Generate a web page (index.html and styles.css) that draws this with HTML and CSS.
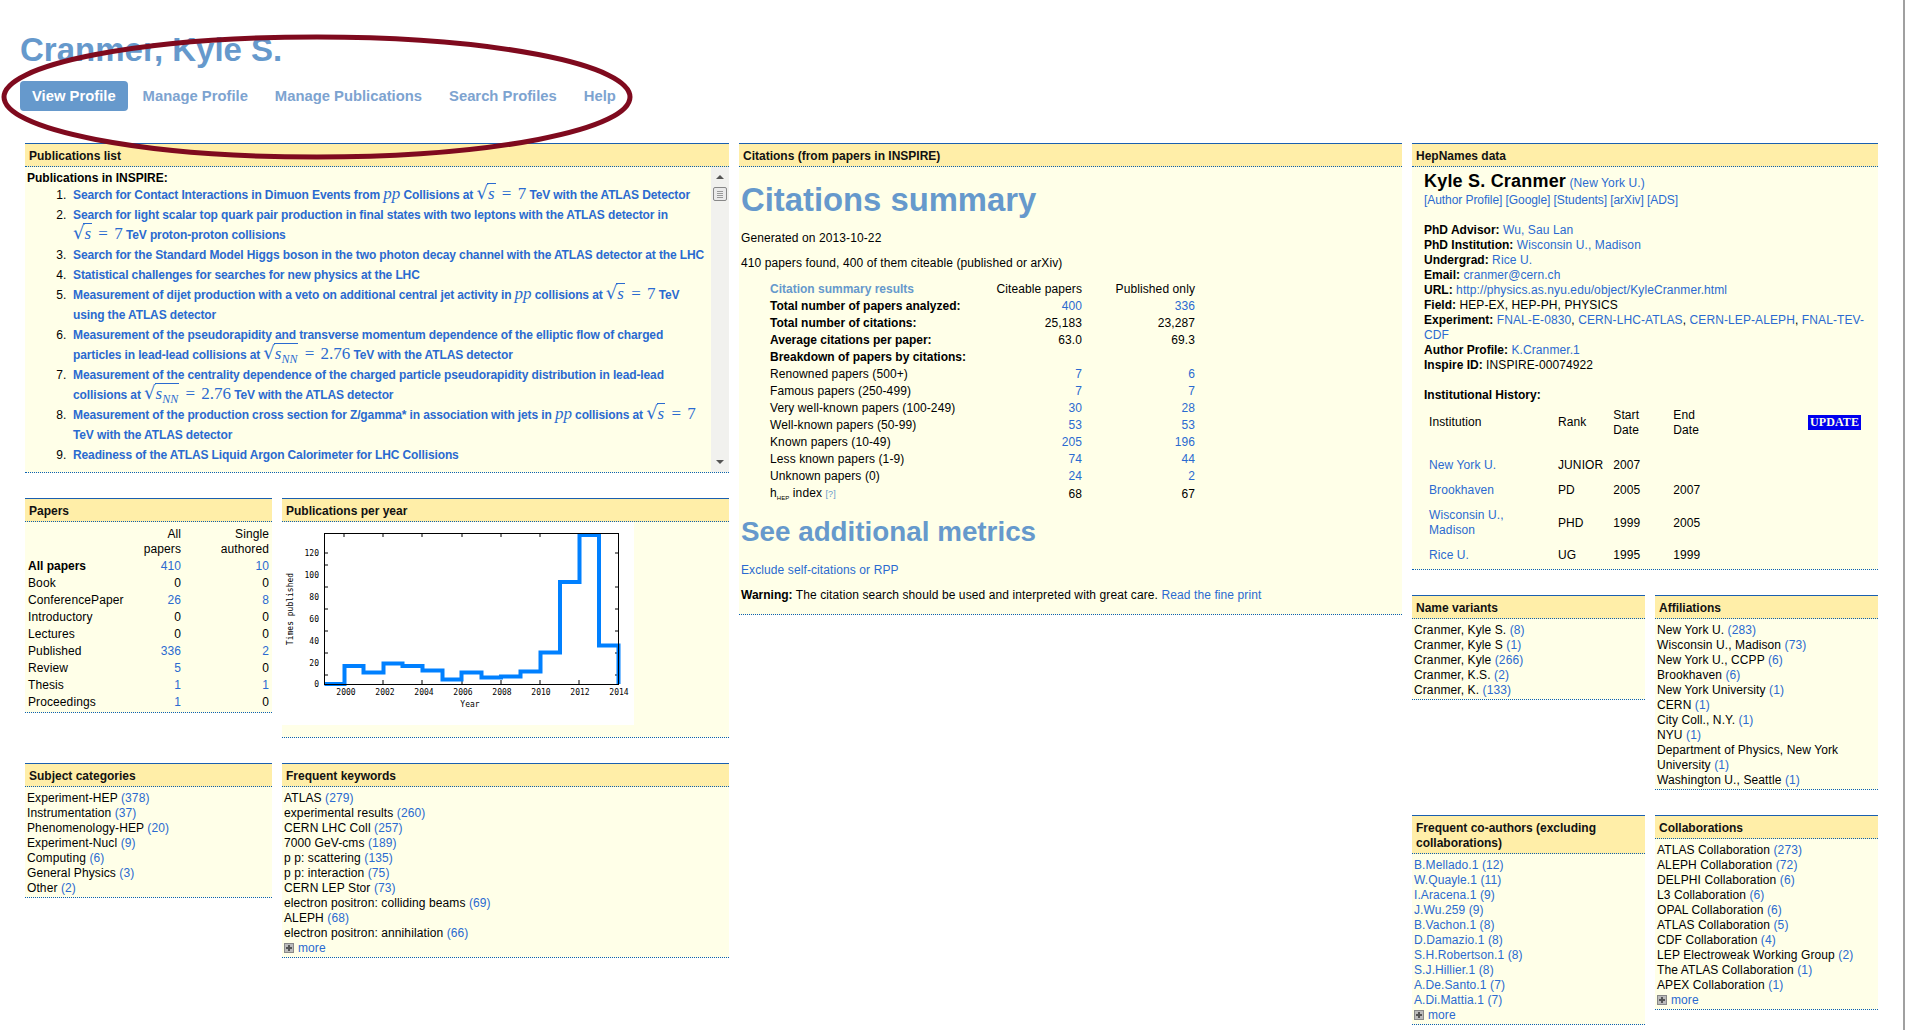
FILE: index.html
```html
<!DOCTYPE html>
<html lang="en">
<head>
  <meta charset="UTF-8" />
  <title>Cranmer, Kyle S. - Author profile</title>
  <link rel="stylesheet" href="styles.css">
</head>
<body>

  <!-- Highlight drawn over the page header -->
  <svg class="highlight" width="640" height="170" viewBox="0 0 640 170">
    <ellipse cx="317" cy="97" rx="313" ry="60" fill="none" stroke="#7f0a1e" stroke-width="5"/>
  </svg>

  <header class="page-header">
    <h1>Cranmer, Kyle S.</h1>
    <nav class="tabs">
      <a class="tab active" href="#">View Profile</a>
      <a class="tab" href="#">Manage Profile</a>
      <a class="tab" href="#">Manage Publications</a>
      <a class="tab" href="#">Search Profiles</a>
      <a class="tab" href="#">Help</a>
    </nav>
  </header>

  <main class="columns">

    <!-- Left column -->
    <div class="col col-left">
      <section class="box box-pubs">
        <h4>Publications list</h4>
        <div class="pubs-body">
          <div class="pubs-text">
            <strong class="pubs-title">Publications in INSPIRE:</strong>
            <ol class="pubs">
              <li><a href="#">Search for Contact Interactions in Dimuon Events from <i class="m">pp</i> Collisions at <span class="m"><span class="rad">√</span><i class="vinc">s</i> = 7</span> TeV with the ATLAS Detector</a></li>
              <li><a href="#">Search for light scalar top quark pair production in final states with two leptons with the ATLAS detector in <span class="m"><span class="rad">√</span><i class="vinc">s</i> = 7</span> TeV proton-proton collisions</a></li>
              <li><a href="#">Search for the Standard Model Higgs boson in the two photon decay channel with the ATLAS detector at the LHC</a></li>
              <li><a href="#">Statistical challenges for searches for new physics at the LHC</a></li>
              <li><a href="#">Measurement of dijet production with a veto on additional central jet activity in <i class="m">pp</i> collisions at <span class="m"><span class="rad">√</span><i class="vinc">s</i> = 7</span> TeV using the ATLAS detector</a></li>
              <li><a href="#">Measurement of the pseudorapidity and transverse momentum dependence of the elliptic flow of charged particles in lead-lead collisions at <span class="m"><span class="rad">√</span><i class="vinc">s<sub>NN</sub></i> = 2.76</span> TeV with the ATLAS detector</a></li>
              <li><a href="#">Measurement of the centrality dependence of the charged particle pseudorapidity distribution in lead-lead collisions at <span class="m"><span class="rad">√</span><i class="vinc">s<sub>NN</sub></i> = 2.76</span> TeV with the ATLAS detector</a></li>
              <li><a href="#">Measurement of the production cross section for Z/gamma* in association with jets in <i class="m">pp</i> collisions at <span class="m"><span class="rad">√</span><i class="vinc">s</i> = 7</span> TeV with the ATLAS detector</a></li>
              <li><a href="#">Readiness of the ATLAS Liquid Argon Calorimeter for LHC Collisions</a></li>
            </ol>
          </div>
          <div class="scrollbar">
            <span class="arrow-up"></span>
            <span class="thumb"></span>
            <span class="arrow-down"></span>
          </div>
        </div>
      </section>

      <div class="row row-papers">
        <section class="box box-narrow box-papers">
          <h4>Papers</h4>
          <table class="papers">
            <tr><th></th><td>All<br>papers</td><td>Single<br>authored</td></tr>
            <tr><th><b>All papers</b></th><td><a href="#">410</a></td><td><a href="#">10</a></td></tr>
            <tr><th>Book</th><td>0</td><td>0</td></tr>
            <tr><th>ConferencePaper</th><td><a href="#">26</a></td><td><a href="#">8</a></td></tr>
            <tr><th>Introductory</th><td>0</td><td>0</td></tr>
            <tr><th>Lectures</th><td>0</td><td>0</td></tr>
            <tr><th>Published</th><td><a href="#">336</a></td><td><a href="#">2</a></td></tr>
            <tr><th>Review</th><td><a href="#">5</a></td><td>0</td></tr>
            <tr><th>Thesis</th><td><a href="#">1</a></td><td><a href="#">1</a></td></tr>
            <tr><th>Proceedings</th><td><a href="#">1</a></td><td>0</td></tr>
          </table>
        </section>

        <section class="box box-wide box-chart">
          <h4>Publications per year</h4>
          <div class="chart-wrap">
            <svg class="chart" width="352" height="203" viewBox="0 0 352 203">
              <rect width="352" height="203" fill="#fff"/>
              <g class="ticks" stroke="#000" stroke-width="1">
                <path d="M42 153h4M42 131h4M42 109h4M42 87h4M42 65h4M42 43h4M42 31h4M337 153h-4M337 131h-4M337 109h-4M337 87h-4M337 65h-4M337 31h-4"/>
                <path d="M62 162v-4M101 162v-4M140 162v-4M180 162v-4M219 162v-4M258 162v-4M297 162v-4M62 11v4M101 11v4M140 11v4M180 11v4M219 11v4M258 11v4M297 11v4"/>
              </g>
              <polyline fill="none" stroke="#0080ff" stroke-width="4"
                points="42.5,162 62.5,162 62.5,144 81.5,144 81.5,150.5 101.5,150.5 101.5,141.5 120.5,141.5 120.5,144 140.5,144 140.5,148.5 160.5,148.5 160.5,157.5 179.5,157.5 179.5,150.5 199.5,150.5 199.5,155.5 219,155.5 219,154.5 238.5,154.5 238.5,149.5 258.5,149.5 258.5,130.5 278,130.5 278,60 297.5,60 297.5,13 317,13 317,123.5 336.5,123.5 336.5,162"/>
              <rect x="42.5" y="11.5" width="294" height="151" fill="none" stroke="#000" stroke-width="1"/>
              <g class="chart-text" text-anchor="end">
                <text x="37" y="165">0</text>
                <text x="37" y="144">20</text>
                <text x="37" y="122">40</text>
                <text x="37" y="100">60</text>
                <text x="37" y="78">80</text>
                <text x="37" y="56">100</text>
                <text x="37" y="34">120</text>
              </g>
              <g class="chart-text" text-anchor="middle">
                <text x="64" y="173">2000</text>
                <text x="103" y="173">2002</text>
                <text x="142" y="173">2004</text>
                <text x="181" y="173">2006</text>
                <text x="220" y="173">2008</text>
                <text x="259" y="173">2010</text>
                <text x="298" y="173">2012</text>
                <text x="337" y="173">2014</text>
                <text x="188" y="185">Year</text>
                <text transform="translate(11 87) rotate(-90)">Times published</text>
              </g>
            </svg>
          </div>
        </section>
      </div>

      <div class="row">
        <section class="box box-narrow box-list">
          <h4>Subject categories</h4>
          <ul class="counts">
            <li>Experiment-HEP <a href="#">(378)</a></li>
            <li>Instrumentation <a href="#">(37)</a></li>
            <li>Phenomenology-HEP <a href="#">(20)</a></li>
            <li>Experiment-Nucl <a href="#">(9)</a></li>
            <li>Computing <a href="#">(6)</a></li>
            <li>General Physics <a href="#">(3)</a></li>
            <li>Other <a href="#">(2)</a></li>
          </ul>
        </section>

        <section class="box box-wide box-list">
          <h4>Frequent keywords</h4>
          <ul class="counts">
            <li>ATLAS <a href="#">(279)</a></li>
            <li>experimental results <a href="#">(260)</a></li>
            <li>CERN LHC Coll <a href="#">(257)</a></li>
            <li>7000 GeV-cms <a href="#">(189)</a></li>
            <li>p p: scattering <a href="#">(135)</a></li>
            <li>p p: interaction <a href="#">(75)</a></li>
            <li>CERN LEP Stor <a href="#">(73)</a></li>
            <li>electron positron: colliding beams <a href="#">(69)</a></li>
            <li>ALEPH <a href="#">(68)</a></li>
            <li>electron positron: annihilation <a href="#">(66)</a></li>
            <li class="more"><span class="plus"></span><a href="#">more</a></li>
          </ul>
        </section>
      </div>
    </div>

    <!-- Middle column -->
    <div class="col col-middle">
      <section class="box box-cites">
        <h4>Citations (from papers in INSPIRE)</h4>
        <div class="cites-body">
          <h2>Citations summary</h2>
          <p class="generated">Generated on 2013-10-22</p>
          <p class="found">410 papers found, 400 of them citeable (published or arXiv)</p>
          <table class="cites">
            <tr><th class="cites-title">Citation summary results</th><td>Citeable papers</td><td>Published only</td></tr>
            <tr><th><b>Total number of papers analyzed:</b></th><td><a href="#">400</a></td><td><a href="#">336</a></td></tr>
            <tr><th><b>Total number of citations:</b></th><td>25,183</td><td>23,287</td></tr>
            <tr><th><b>Average citations per paper:</b></th><td>63.0</td><td>69.3</td></tr>
            <tr><th><b>Breakdown of papers by citations:</b></th><td></td><td></td></tr>
            <tr><th>Renowned papers (500+)</th><td><a href="#">7</a></td><td><a href="#">6</a></td></tr>
            <tr><th>Famous papers (250-499)</th><td><a href="#">7</a></td><td><a href="#">7</a></td></tr>
            <tr><th>Very well-known papers (100-249)</th><td><a href="#">30</a></td><td><a href="#">28</a></td></tr>
            <tr><th>Well-known papers (50-99)</th><td><a href="#">53</a></td><td><a href="#">53</a></td></tr>
            <tr><th>Known papers (10-49)</th><td><a href="#">205</a></td><td><a href="#">196</a></td></tr>
            <tr><th>Less known papers (1-9)</th><td><a href="#">74</a></td><td><a href="#">44</a></td></tr>
            <tr><th>Unknown papers (0)</th><td><a href="#">24</a></td><td><a href="#">2</a></td></tr>
            <tr><th>h<sub class="hep">HEP</sub> index <a class="hint" href="#">[?]</a></th><td>68</td><td>67</td></tr>
          </table>
          <h3>See additional metrics</h3>
          <p class="exclude"><a href="#">Exclude self-citations or RPP</a></p>
          <p class="warning"><b>Warning:</b> The citation search should be used and interpreted with great care. <a href="#">Read the fine print</a></p>
        </div>
      </section>
    </div>

    <!-- Right column -->
    <div class="col col-right">
      <section class="box box-hep">
        <h4>HepNames data</h4>
        <div class="hep-body">
          <div class="hep-name"><b>Kyle S. Cranmer</b> <a href="#">(New York U.)</a></div>
          <div class="hep-links"><a href="#">[Author Profile]</a> <a href="#">[Google]</a> <a href="#">[Students]</a> <a href="#">[arXiv]</a> <a href="#">[ADS]</a></div>
          <div class="hep-facts">
            <div><b>PhD Advisor:</b> <a href="#">Wu, Sau Lan</a></div>
            <div><b>PhD Institution:</b> <a href="#">Wisconsin U., Madison</a></div>
            <div><b>Undergrad:</b> <a href="#">Rice U.</a></div>
            <div><b>Email:</b> <a href="#">cranmer@cern.ch</a></div>
            <div><b>URL:</b> <a href="#">http://physics.as.nyu.edu/object/KyleCranmer.html</a></div>
            <div><b>Field:</b> HEP-EX, HEP-PH, PHYSICS</div>
            <div><b>Experiment:</b> <a href="#">FNAL-E-0830</a>, <a href="#">CERN-LHC-ATLAS</a>, <a href="#">CERN-LEP-ALEPH</a>, <a href="#">FNAL-TEV-CDF</a></div>
            <div><b>Author Profile:</b> <a href="#">K.Cranmer.1</a></div>
            <div><b>Inspire ID:</b> INSPIRE-00074922</div>
          </div>
          <div class="hist-title"><b>Institutional History:</b></div>
          <table class="history">
            <tr class="hist-head"><td class="c-inst">Institution</td><td class="c-rank">Rank</td><td class="c-date">Start<br>Date</td><td class="c-date">End<br>Date</td><td class="c-update"><span class="update">UPDATE</span></td></tr>
            <tr><td><a href="#">New York U.</a></td><td>JUNIOR</td><td>2007</td><td></td><td></td></tr>
            <tr><td><a href="#">Brookhaven</a></td><td>PD</td><td>2005</td><td>2007</td><td></td></tr>
            <tr><td><a href="#">Wisconsin U., Madison</a></td><td>PHD</td><td>1999</td><td>2005</td><td></td></tr>
            <tr><td><a href="#">Rice U.</a></td><td>UG</td><td>1995</td><td>1999</td><td></td></tr>
          </table>
        </div>
      </section>

      <div class="row row-right-a">
        <section class="box box-half box-list">
          <h4>Name variants</h4>
          <ul class="counts">
            <li>Cranmer, Kyle S. <a href="#">(8)</a></li>
            <li>Cranmer, Kyle S <a href="#">(1)</a></li>
            <li>Cranmer, Kyle <a href="#">(266)</a></li>
            <li>Cranmer, K.S. <a href="#">(2)</a></li>
            <li>Cranmer, K. <a href="#">(133)</a></li>
          </ul>
        </section>
        <section class="box box-half2 box-list">
          <h4>Affiliations</h4>
          <ul class="counts">
            <li>New York U. <a href="#">(283)</a></li>
            <li>Wisconsin U., Madison <a href="#">(73)</a></li>
            <li>New York U., CCPP <a href="#">(6)</a></li>
            <li>Brookhaven <a href="#">(6)</a></li>
            <li>New York University <a href="#">(1)</a></li>
            <li>CERN <a href="#">(1)</a></li>
            <li>City Coll., N.Y. <a href="#">(1)</a></li>
            <li>NYU <a href="#">(1)</a></li>
            <li>Department of Physics, New York University <a href="#">(1)</a></li>
            <li>Washington U., Seattle <a href="#">(1)</a></li>
          </ul>
        </section>
      </div>

      <div class="row row-right-b">
        <section class="box box-half box-list">
          <h4>Frequent co-authors (excluding collaborations)</h4>
          <ul class="counts links">
            <li><a href="#">B.Mellado.1</a> <a href="#">(12)</a></li>
            <li><a href="#">W.Quayle.1</a> <a href="#">(11)</a></li>
            <li><a href="#">I.Aracena.1</a> <a href="#">(9)</a></li>
            <li><a href="#">J.Wu.259</a> <a href="#">(9)</a></li>
            <li><a href="#">B.Vachon.1</a> <a href="#">(8)</a></li>
            <li><a href="#">D.Damazio.1</a> <a href="#">(8)</a></li>
            <li><a href="#">S.H.Robertson.1</a> <a href="#">(8)</a></li>
            <li><a href="#">S.J.Hillier.1</a> <a href="#">(8)</a></li>
            <li><a href="#">A.De.Santo.1</a> <a href="#">(7)</a></li>
            <li><a href="#">A.Di.Mattia.1</a> <a href="#">(7)</a></li>
            <li class="more"><span class="plus"></span><a href="#">more</a></li>
          </ul>
        </section>
        <section class="box box-half2 box-list">
          <h4>Collaborations</h4>
          <ul class="counts">
            <li>ATLAS Collaboration <a href="#">(273)</a></li>
            <li>ALEPH Collaboration <a href="#">(72)</a></li>
            <li>DELPHI Collaboration <a href="#">(6)</a></li>
            <li>L3 Collaboration <a href="#">(6)</a></li>
            <li>OPAL Collaboration <a href="#">(6)</a></li>
            <li>ATLAS Collaboration <a href="#">(5)</a></li>
            <li>CDF Collaboration <a href="#">(4)</a></li>
            <li>LEP Electroweak Working Group <a href="#">(2)</a></li>
            <li>The ATLAS Collaboration <a href="#">(1)</a></li>
            <li>APEX Collaboration <a href="#">(1)</a></li>
            <li class="more"><span class="plus"></span><a href="#">more</a></li>
          </ul>
        </section>
      </div>
    </div>
  </main>

  <div class="page-scroll"></div>

</body>
</html>
```

FILE: styles.css
```css
/* Reset and base styling */
* {
  box-sizing: border-box;
}

html, body {
  height: 1030px;
  overflow: hidden;
}

body {
  margin: 0;
  background: #fff;
  color: #000;
  font-family: "Liberation Sans", Arial, sans-serif;
  font-size: 12px;
  line-height: 15px;
  letter-spacing: 0.1px;
  position: relative;
}

b, strong {
  letter-spacing: 0;
}

a {
  color: #2a6ad0;
  text-decoration: none;
}

/* Red ring over the header */
.highlight {
  position: absolute;
  left: 0;
  top: 0;
  z-index: 5;
}

/* Header */
.page-header {
  height: 143px;
  padding: 32px 0 0 20px;
}

h1 {
  margin: 0;
  font-size: 33px;
  line-height: 36px;
  font-weight: bold;
  letter-spacing: 0;
  color: #6699cc;
}

.tabs {
  display: flex;
  margin-top: 13px;
  gap: 3px;
}

.tab {
  padding: 7px 12px;
  height: 30px;
  line-height: 16px;
  font-size: 14.8px;
  font-weight: bold;
  letter-spacing: 0;
  color: #7da3d0;
  border-radius: 4px;
}

.tab.active {
  background: #6699cc;
  color: #fff;
}

/* Columns */
.columns {
  display: flex;
  padding-left: 25px;
  gap: 10px;
}

.col-left {
  width: 704px;
}

.col-middle {
  width: 663px;
}

.col-right {
  width: 466px;
}

.row {
  display: flex;
  gap: 10px;
  align-items: flex-start;
}

/* Boxes */
.box {
  background: #ffffe8;
  border-bottom: 1px dotted #0a5fb4;
}

.box h4 {
  margin: 0;
  padding: 5px 4px 2px;
  min-height: 24px;
  background: #ffeea8;
  border-top: 1px solid #1a5fb0;
  border-bottom: 1px dotted #0a5fb4;
  font-size: 12px;
  line-height: 15px;
  font-weight: bold;
  letter-spacing: 0;
  color: #111;
}

.box-pubs {
  height: 330px;
  margin-bottom: 25px;
}

.pubs-body {
  display: flex;
  justify-content: space-between;
  height: 305px;
  overflow: hidden;
}

.pubs-text {
  padding: 4px 0 0 2px;
  width: 680px;
}

.pubs-title {
  display: block;
  line-height: 14px;
}

.pubs {
  margin: 0;
  padding: 0 0 0 43px;
}

.pubs li {
  line-height: 20px;
  padding-left: 3px;
}

.pubs a {
  font-weight: bold;
  letter-spacing: -0.12px;
}

/* Math */
.m {
  font-family: "Liberation Serif", "DejaVu Serif", serif;
  font-size: 17px;
  font-weight: normal;
  letter-spacing: 0;
  line-height: 0;
  word-spacing: 2px;
  white-space: nowrap;
}

.rad {
  font-family: "DejaVu Sans", sans-serif;
  font-size: 18px;
}

.vinc {
  border-top: 1px solid #2a6ad0;
  padding: 0 1px;
  margin-left: -1px;
}

.vinc sub {
  font-size: 12px;
  line-height: 0;
}

/* Inner scrollbar */
.scrollbar {
  width: 18px;
  height: 305px;
  background: #f1f1ee;
  display: flex;
  flex-direction: column;
  align-items: center;
}

.arrow-up,
.arrow-down {
  width: 0;
  height: 0;
  border-left: 4px solid transparent;
  border-right: 4px solid transparent;
}

.arrow-up {
  margin-top: 8px;
  border-bottom: 4px solid #555;
}

.arrow-down {
  margin-top: auto;
  margin-bottom: 8px;
  border-top: 4px solid #555;
}

.thumb {
  width: 14px;
  height: 14px;
  margin-top: 8px;
  background: repeating-linear-gradient(#999 0 1px, #eee 1px 2px);
  background-size: 6px 7px;
  background-repeat: no-repeat;
  background-position: center;
  background-color: #eaeaea;
  border: 1px solid #888;
  border-radius: 2px;
}

/* Papers table */
.box-narrow {
  width: 247px;
}

.box-wide {
  width: 447px;
}

.box-papers {
  height: 215px;
}

.papers {
  width: 100%;
  border-collapse: collapse;
  margin-top: 4px;
}

.papers th {
  text-align: left;
  font-weight: normal;
  padding: 1px 0 1px 3px;
  vertical-align: top;
}

.papers td {
  text-align: right;
  padding: 1px 3px 1px 0;
  vertical-align: top;
}

.papers td:nth-child(2) {
  width: 58px;
  padding-right: 0;
}

.papers td:nth-child(3) {
  width: 92px;
}

/* Chart */
.row-papers {
  margin-bottom: 25px;
}

.box-chart {
  height: 240px;
}

.chart-wrap {
  height: 215px;
}

.chart {
  display: block;
}

.chart-text {
  font-family: "DejaVu Sans Mono", "Liberation Mono", monospace;
  font-size: 8px;
  letter-spacing: 0;
}

/* Count lists */
.counts {
  list-style: none;
  margin: 0;
  padding: 4px 3px 1px 2px;
}

.counts li {
  line-height: 15px;
}

.plus {
  display: inline-block;
  width: 10px;
  height: 10px;
  margin-right: 4px;
  vertical-align: -1px;
  background: linear-gradient(#555, #555) center / 6px 2px no-repeat,
              linear-gradient(#555, #555) center / 2px 6px no-repeat,
              #bbb;
  border: 1px solid #888;
}

/* Citations */
.box-cites {
  height: 472px;
}

.cites-body {
  padding: 0 2px;
}

.cites-body h2 {
  margin: 0;
  padding-top: 15px;
  font-size: 32.8px;
  line-height: 36px;
  letter-spacing: 0;
  color: #6699cc;
}

.cites-body p {
  margin: 0;
}

.generated {
  padding-top: 13px;
}

.found {
  padding-top: 10px;
}

.cites {
  border-collapse: collapse;
  margin: 10px 0 0 29px;
}

.cites th {
  text-align: left;
  font-weight: normal;
  width: 199px;
  padding: 1px 0;
  height: 17px;
}

.cites td {
  text-align: right;
  width: 113px;
  padding: 1px 0;
  height: 17px;
}

.cites-title {
  color: #6699cc;
  font-weight: bold !important;
  letter-spacing: 0;
}

.hep {
  font-size: 6px;
  line-height: 0;
}

.hint {
  font-size: 9px;
  color: #6699cc;
}

.cites-body h3 {
  margin: 0;
  padding-top: 13px;
  font-size: 27.8px;
  line-height: 31px;
  letter-spacing: 0;
  color: #6699cc;
}

.exclude {
  padding-top: 16px;
}

.warning {
  padding-top: 10px;
}

/* HepNames */
.box-hep {
  height: 427px;
  margin-bottom: 25px;
}

.hep-body {
  padding: 4px 10px 0 12px;
}

.hep-name {
  height: 22px;
  line-height: 20px;
}

.hep-name b {
  font-size: 18px;
  letter-spacing: 0.2px;
}

.hep-links {
  line-height: 15px;
  letter-spacing: -0.07px;
}

.hep-facts {
  margin-top: 15px;
}

.hist-title {
  margin-top: 15px;
}

.history {
  width: 100%;
  border-collapse: collapse;
}

.history td {
  padding: 5px 5px;
  vertical-align: middle;
}

.hist-head td {
  padding-bottom: 15px;
}

.hist-head .c-inst,
.hist-head .c-rank,
.hist-head .c-update {
  padding-bottom: 17px;
}

.c-inst {
  width: 129px;
}

.c-rank {
  width: 55px;
}

.c-date {
  width: 60px;
}

.history .c-update {
  text-align: right;
  padding-right: 7px;
}

.update {
  display: inline-block;
  padding: 0 2px;
  background: #0000ee;
  color: #ffffe8;
  font-family: "Liberation Serif", serif;
  font-size: 12px;
  font-weight: bold;
}

/* Right column boxes */
.box-half {
  width: 233px;
}

.box-half2 {
  width: 223px;
}

.row-right-a {
  height: 220px;
}

/* Window edge */
.page-scroll {
  position: absolute;
  right: 0;
  top: 0;
  width: 2px;
  height: 1030px;
  background: #a0a0a0;
}
```
